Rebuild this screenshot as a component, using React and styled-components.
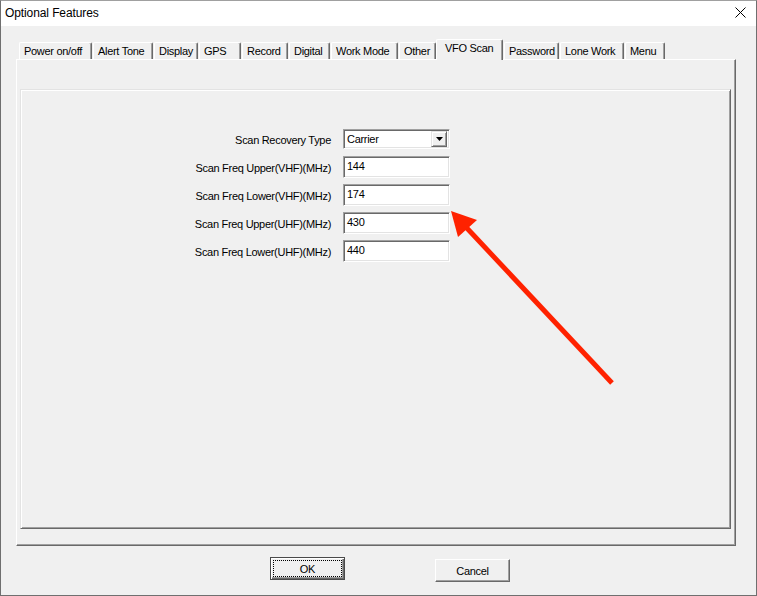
import styled, { createGlobalStyle } from "styled-components";

const GlobalStyle = createGlobalStyle`
  html, body {
    margin: 0;
    padding: 0;
    background: #f0f0f0;
  }
  * {
    box-sizing: border-box;
  }
`;

const tabs = [
  { label: "Power on/off", width: 73 },
  { label: "Alert Tone", width: 60 },
  { label: "Display", width: 44 },
  { label: "GPS", width: 42 },
  { label: "Record", width: 46 },
  { label: "Digital", width: 41 },
  { label: "Work Mode", width: 67 },
  { label: "Other", width: 37 },
  { label: "VFO Scan", width: 67, selected: true },
  { label: "Password", width: 55 },
  { label: "Lone Work", width: 64 },
  { label: "Menu", width: 40 },
];

const fields = [
  { label: "Scan Freq Upper(VHF)(MHz)", value: "144" },
  { label: "Scan Freq Lower(VHF)(MHz)", value: "174" },
  { label: "Scan Freq Upper(UHF)(MHz)", value: "430" },
  { label: "Scan Freq Lower(UHF)(MHz)", value: "440" },
];

const App = () => {
  return (
    <>
      <GlobalStyle />
      <Window>
        <TitleBar>
          <Title>Optional Features</Title>
          <CloseIcon width="11" height="11" viewBox="0 0 11 11">
            <path d="M0.5 0.5 L10.5 10.5 M10.5 0.5 L0.5 10.5" stroke="#000" strokeWidth="1" />
          </CloseIcon>
        </TitleBar>
        <Body>
          <TabRow>
            {tabs.map((t) => (
              <Tab key={t.label} $width={t.width} $selected={t.selected}>
                {t.label}
              </Tab>
            ))}
          </TabRow>
          <TabPanel>
            <GroupBox>
              <Form>
                <Label>Scan Recovery Type</Label>
                <Select>
                  <SelectText>Carrier</SelectText>
                  <DropButton>
                    <svg width="7" height="4" viewBox="0 0 7 4">
                      <path d="M0 0 H7 L3.5 4 Z" fill="#000" />
                    </svg>
                  </DropButton>
                </Select>
                {fields.map((f) => (
                  <FieldPair key={f.label}>
                    <Label>{f.label}</Label>
                    <TextBox>{f.value}</TextBox>
                  </FieldPair>
                ))}
              </Form>
            </GroupBox>
          </TabPanel>
          <ButtonRow>
            <Button $default>OK</Button>
            <Button>Cancel</Button>
          </ButtonRow>
        </Body>
        <Arrow width="757" height="596" viewBox="0 0 757 596">
          <line x1="612" y1="383" x2="464" y2="225" stroke="#ff2200" strokeWidth="5" />
          <polygon points="451,211 477,220 458,237" fill="#ff2200" />
        </Arrow>
      </Window>
    </>
  );
};

const Window = styled.div`
  position: relative;
  width: 757px;
  height: 596px;
  border: 1px solid #6f6f6f;
  border-top-color: #a0a0a0;
  display: flex;
  flex-direction: column;
  background: #f0f0f0;
  font-family: "Liberation Sans", Arial, sans-serif;
  font-size: 11px;
  letter-spacing: -0.3px;
  color: #000;
`;

const TitleBar = styled.div`
  height: 25px;
  background: #fff;
  display: flex;
  align-items: center;
  justify-content: space-between;
  padding: 0 10px 0 4px;
`;

const Title = styled.div`
  font-size: 12px;
  letter-spacing: -0.1px;
  padding-bottom: 1px;
`;

const CloseIcon = styled.svg`
  display: block;
  margin-bottom: 2px;
`;

const Body = styled.div`
  flex: 1;
  display: flex;
  flex-direction: column;
  padding: 13px 20px 0 15px;
`;

const TabRow = styled.div`
  height: 20px;
  display: flex;
  align-items: flex-end;
  padding-left: 3px;
`;

const Tab = styled.div`
  position: relative;
  width: ${(p) => p.$width}px;
  height: ${(p) => (p.$selected ? 21 : 17)}px;
  margin-right: 1px;
  margin-left: ${(p) => (p.$selected ? -1 : 0)}px;
  margin-bottom: ${(p) => (p.$selected ? -1 : 0)}px;
  z-index: ${(p) => (p.$selected ? 2 : 0)};
  padding: ${(p) => (p.$selected ? "2px 0 0 8px" : "2px 0 0 4px")};
  line-height: 13px;
  white-space: nowrap;
  background: #f0f0f0;
  border-top: 1px solid #fff;
  border-left: 1px solid #fff;
  border-right: 1px solid #696969;
  border-radius: 2px 2px 0 0;
  box-shadow: inset -1px 0 0 #a0a0a0;
`;

const TabPanel = styled.div`
  height: 487px;
  display: flex;
  padding: 29px 4px 16px 3px;
  border: 1px solid;
  border-color: #fff #696969 #696969 #fff;
  box-shadow: inset -1px -1px 0 #a0a0a0;
`;

const GroupBox = styled.div`
  flex: 1;
  border: 1px solid;
  border-color: #e3e3e3 #696969 #696969 #e3e3e3;
  box-shadow: inset 1px 1px 0 #fff, inset -1px -1px 0 #a0a0a0;
  padding: 38px 0 0 160px;
`;

const Form = styled.div`
  display: grid;
  grid-template-columns: 150px 107px;
  grid-auto-rows: 22px;
  column-gap: 12px;
  row-gap: 6px;
  align-items: center;
`;

const FieldPair = styled.div`
  display: contents;
`;

const Label = styled.div`
  text-align: right;
  white-space: nowrap;
  letter-spacing: -0.3px;
  padding-top: 1px;
`;

const sunken = `
  border: 1px solid;
  border-color: #a0a0a0 #fff #fff #a0a0a0;
  box-shadow: inset 1px 1px 0 #696969, inset -1px -1px 0 #e3e3e3;
  background: #fff;
`;

const TextBox = styled.div`
  ${sunken}
  height: 22px;
  padding: 2px 0 0 3px;
  line-height: 15px;
`;

const Select = styled.div`
  ${sunken}
  height: 20px;
  display: flex;
  align-items: center;
  justify-content: space-between;
  padding: 0 2px 0 3px;
`;

const SelectText = styled.span`
  line-height: 14px;
`;

const DropButton = styled.div`
  width: 16px;
  height: 16px;
  display: flex;
  align-items: center;
  justify-content: center;
  background: #f0f0f0;
  border: 1px solid;
  border-color: #e3e3e3 #696969 #696969 #e3e3e3;
  box-shadow: inset 1px 1px 0 #fff, inset -1px -1px 0 #a0a0a0;
`;

const ButtonRow = styled.div`
  display: flex;
  align-items: flex-start;
  gap: 90px;
  padding: 11px 0 0 254px;
`;

const Button = styled.div`
  width: 75px;
  height: 23px;
  display: flex;
  align-items: center;
  justify-content: center;
  font-size: 11px;
  background: #f0f0f0;
  border: 1px solid;
  border-color: ${(p) => (p.$default ? "#4a4a4a" : "#fff #696969 #696969 #fff")};
  box-shadow: ${(p) =>
    p.$default
      ? "inset 1px 1px 0 #fff, inset -1px -1px 0 #696969, inset -2px -2px 0 #a0a0a0"
      : "inset -1px -1px 0 #a0a0a0"};
  margin-top: ${(p) => (p.$default ? 0 : 2)}px;
  outline: ${(p) => (p.$default ? "1px dotted #000" : "none")};
  outline-offset: -4px;
`;

const Arrow = styled.svg`
  position: absolute;
  left: -1px;
  top: -1px;
  pointer-events: none;
`;

export default App;
